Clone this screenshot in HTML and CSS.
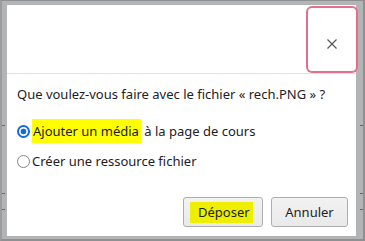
FILE: index.html
```html
<!DOCTYPE html>
<html lang="fr">
<head>
  <meta charset="UTF-8" />
  <title>Déposer un fichier</title>
  <link rel="stylesheet" href="styles.css">
</head>
<body>
  <div class="dialog">
    <div class="dialog-header">
      <button class="close" aria-label="Fermer">
        <svg width="10" height="10" viewBox="0 0 10 10">
          <path d="M0.5 0.5 L9.5 9.5 M9.5 0.5 L0.5 9.5" stroke="#5a5a5a" stroke-width="1.3" fill="none" />
        </svg>
      </button>
    </div>
    <div class="dialog-body">
      <p class="question">Que voulez-vous faire avec le fichier « rech.PNG » ?</p>
      <label class="option">
        <span class="radio checked"></span>
        <span class="label"><mark>Ajouter un média</mark> à la page de cours</span>
      </label>
      <label class="option">
        <span class="radio"></span>
        <span class="label">Créer une ressource fichier</span>
      </label>
    </div>
    <div class="dialog-footer">
      <button class="btn"><mark class="btn-mark">Déposer</mark></button>
      <button class="btn">Annuler</button>
    </div>
  </div>
</body>
</html>
```

FILE: styles.css
```css
html, body {
  margin: 0;
  height: 241px;
  overflow: hidden;
}
body {
  box-sizing: border-box;
  background-color: #b2b4b6;
  border-top: 1px solid #8e9092;
  border-left: 2px solid #9a9c9e;
  border-right: 2px solid #8e9092;
  border-bottom: 2px solid #8e9092;
  padding: 4px 7px 3px 5px;
  font-family: "Noto Sans", "Open Sans", sans-serif;
  font-size: 13px;
  color: #1d2125;
  /* red marks of the page behind the dialog */
  background-image:
    linear-gradient(#c0385a, #c0385a),
    linear-gradient(#c0385a, #c0385a),
    linear-gradient(#c0385a, #c0385a),
    linear-gradient(#c0385a, #c0385a),
    linear-gradient(#c0385a, #c0385a),
    linear-gradient(#c0385a, #c0385a);
  background-repeat: no-repeat;
  background-size: 5px 1px;
  background-position:
    0 125px, 0 193px, 0 209px,
    right 0 top 125px, right 0 top 193px, right 0 top 209px;
}
.dialog {
  background: #fff;
  height: 231px;
  display: flex;
  flex-direction: column;
}
.dialog-header {
  box-sizing: border-box;
  height: 69px;
  border-bottom: 1px solid #dee2e6;
  display: flex;
  justify-content: flex-end;
  align-items: flex-start;
  padding-top: 3px;
}
.close {
  width: 48px;
  height: 63px;
  margin: 0;
  padding: 8px 0 0 0;
  background: #fff;
  border: none;
  border-radius: 4px;
  box-shadow: 0 0 0 2px #e07188;
  display: flex;
  align-items: center;
  justify-content: center;
}
.dialog-body {
  padding: 10px 10px 0 10px;
}
.question {
  margin: 0;
  line-height: 20px;
}
.option {
  display: flex;
  align-items: center;
  height: 20px;
  margin-top: 10px;
}
.question + .option {
  margin-top: 17px;
}
.radio {
  box-sizing: border-box;
  width: 13px;
  height: 13px;
  border-radius: 50%;
  border: 1px solid #858585;
  margin: 0 2px 0 0;
  flex: none;
}
.radio.checked {
  border: 2px solid #0f6cde;
  background: radial-gradient(circle, #0f6cde 0 2.6px, #fff 3.2px);
}
mark {
  background: #ffff00;
  color: inherit;
  padding: 1px 2px 1px 1px;
}
.label mark {
  display: inline-block;
  line-height: 22px;
}
.dialog-footer {
  margin-top: auto;
  display: flex;
  justify-content: flex-end;
  gap: 8px;
  padding: 0 8px 9px 0;
}
.btn {
  font: inherit;
  color: #1d2125;
  height: 30px;
  padding: 0 12px;
  background: linear-gradient(#f2f2f2, #e9e9e9);
  border: 1px solid #adadad;
  border-radius: 3px;
  min-width: 77px;
}
.btn:first-child {
  width: 80px;
  padding: 0 10px 0 6px;
}
.btn-mark {
  display: inline-block;
  line-height: 21px;
  padding: 0 3px 0 8px;
  background: #eeee00;
}
```
